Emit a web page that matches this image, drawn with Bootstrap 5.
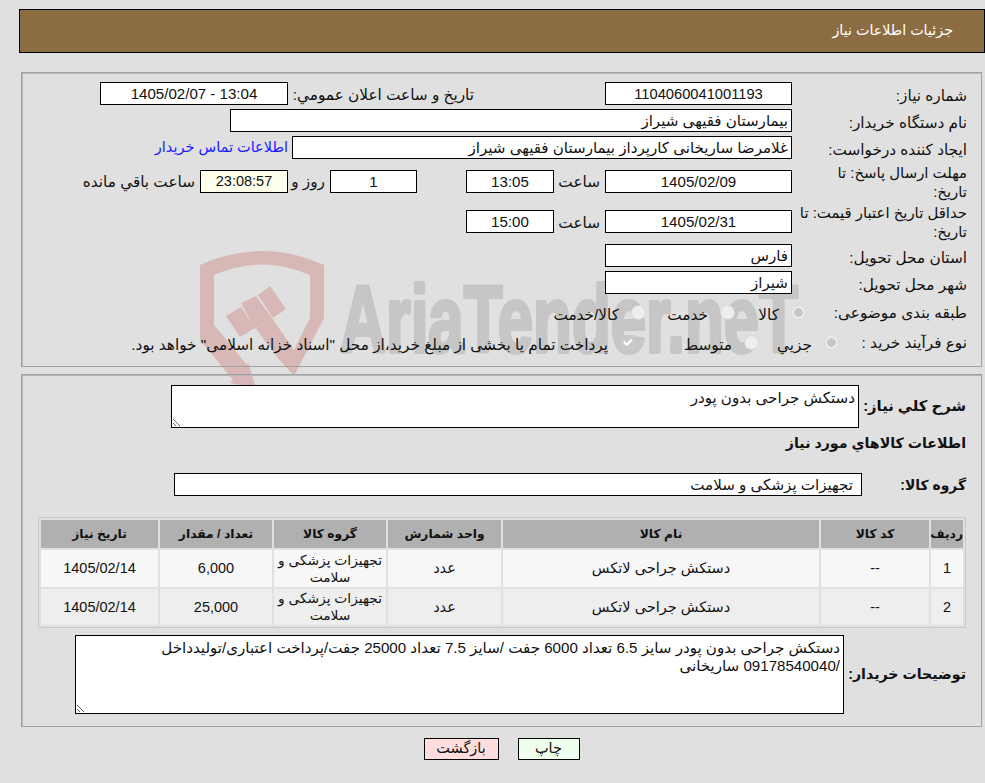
<!DOCTYPE html>
<html lang="fa" dir="rtl">
<head>
<meta charset="utf-8">
<title>جزئیات اطلاعات نیاز</title>
<link href="https://cdn.jsdelivr.net/npm/bootstrap@5.3.0/dist/css/bootstrap.min.css" rel="stylesheet">
<style>
html,body{height:783px;overflow:hidden}
body{background:#e0e0e0;color:#111;font:15.3px/1.2 "Liberation Sans","DejaVu Sans",sans-serif}
.stage{position:relative;width:985px;height:783px;padding-top:9px}
.wm{position:absolute;left:0;top:0;z-index:0}
.layer{position:relative;z-index:1}
.hdr{margin-left:19px;height:44px;background:#8c6d43;border:1px solid #000;color:#fff;padding-right:31px;margin-bottom:19px;font-size:14.3px}
.pnl{margin-right:3px;width:961px;border:1px solid #a0a0a0;box-shadow:inset 1px 1px 0 #b8b8b8}
.p1{padding:9px 14px 8px 0;height:295px;margin-bottom:7px}
.p2{padding:10px 15px 12px 0;height:353px}
.frow{height:23px;margin-bottom:4px}
.h36{height:36px}.h37{height:37px}.h30{height:30px;margin-bottom:0}
.lab{width:175px;flex:none;padding:3px 0 0 5px;line-height:19px;white-space:nowrap}
.lab.tight{font-size:14.9px}
.fld{display:block;flex:none;height:23px;border:1px solid #000;border-radius:0;background:#fff;color:#111;padding:0 3px;font:inherit;font-size:15.1px;outline:0}
.num{font-size:14.7px}
.f187{width:187px}.f188{width:188px}.f88{width:88px}.f87{width:87px}.f562{width:562px}.f500{width:500px}
.clock{background:#ffffee;font-size:14.5px}
.ti{flex:none;padding:3px 5px 0 0}
.w51{width:51px}.w42{width:42px}.sp131{width:131px;flex:none}.sp49{width:49px;flex:none}.lab2{width:186px;flex:none;padding-top:3px}
.linkb{color:#1a1aff;text-decoration:none;padding-right:4px;font-size:14.5px}
.rad{width:15px;height:15px;flex:none;margin:0 0 2px 0!important;opacity:1!important;border:1px solid #d6d6d6!important;background-color:#eeeeee!important}
.rad.on{background-image:radial-gradient(circle,#c6c6c6 0,#c6c6c6 4px,#ececec 4.6px)!important}
.rad.cb{background-color:#c9c9c9!important;border:0!important;border-radius:2px}
.opt{flex:none;gap:12px}
.opt span{padding-top:5px}
.l161{width:161px;flex:none;padding-top:1px}.l128{width:128px;flex:none;padding-top:1px}
.o71{width:71px}.o89{width:89px}.o80{width:80px}.o124{width:124px}
.ttl{font-weight:700;font-size:14.2px;white-space:nowrap}
.ttl.big{font-size:14.8px}
.ttl.sm{font-size:13.9px;padding-top:1px}
.l108{width:107px;flex:none}.l105{width:104px;flex:none}.l122{width:122px;flex:none}
.ta{resize:both;height:43px;width:688px;padding:3px;line-height:18px;direction:rtl}
.ta2{height:79px;width:769px}
.hd2{height:20px;margin:6px 0 19px}
.fg{width:688px}
.tblbox{margin:21px 0 7px 0;width:928px;border:1px solid #c8c8c8;height:111px;font-size:14.5px}
.gt{border-collapse:separate;border-spacing:2px;width:100%;table-layout:fixed;margin:0;text-align:center}
.gt th,.gt td{padding:0;border:0;vertical-align:middle;line-height:17px}
.gt th{background:#b0b0b0;height:28px;font-weight:700;font-size:12.3px;color:#111}
.gt tbody tr:nth-child(1) td{background:#f7f7f7;height:37px}
.gt tbody tr:nth-child(2) td{background:#eeeeee;height:36px}
.gt td.tg{font-size:13.8px}
.btns{margin-top:11px;padding-left:18px;gap:19px}
.bt{height:22px;border:1px solid #000;border-radius:0;padding:0;font:inherit;font-size:14.5px;color:#111}
.bprint{width:62px;background:#eeffee}
.bback{width:75px;background:#ffdddd}
</style>
</head>
<body>
<div class="stage">
  <svg class="wm" width="985" height="430" viewBox="0 0 985 430" aria-hidden="true">
    <g fill="#d8b7b7">
      <path d="M200 265Q262 237 324 265V318L294 376V350L310 318V275Q262 254 214 275V325L247 365L248 362L256 388L230 383L233 380L200 340Z"/>
      <path d="M226 316L241 307L255 328L240 337Z"/>
      <path d="M241 303L256 296L272 318L255 329Z"/>
      <path d="M258 295L270 286L286 309L273 318Z"/>
      <path d="M256 329L272 318L294 350V376L277 357Z"/>
    </g>
    <text x="340" y="352" fill="#c6c6c6" stroke="#c6c6c6" stroke-width="4" stroke-linejoin="round" font-family="Liberation Sans" font-weight="700" font-size="94" textLength="458" lengthAdjust="spacingAndGlyphs" direction="ltr" unicode-bidi="bidi-override">AriaTender.neT</text>
  </svg>
  <div class="layer">
    <div class="hdr d-flex align-items-center">جزئیات اطلاعات نیاز</div>

    <div class="pnl p1">
      <div class="frow d-flex align-items-center">
        <div class="lab">شماره نیاز:</div>
        <input class="fld f187 text-center num" readonly value="1104060041001193">
        <div class="sp131"></div>
        <div class="lab2">تاریخ و ساعت اعلان عمومي:</div>
        <input class="fld f188 text-center" readonly value="1405/02/07 - 13:04" dir="ltr">
      </div>
      <div class="frow d-flex align-items-center">
        <div class="lab">نام دستگاه خریدار:</div>
        <input class="fld f562" readonly value="بیمارستان فقیهی شیراز">
      </div>
      <div class="frow d-flex align-items-center">
        <div class="lab">ایجاد کننده درخواست:</div>
        <input class="fld f500" readonly value="غلامرضا ساریخانی کارپرداز بیمارستان فقیهی شیراز">
        <a class="linkb" href="#">اطلاعات تماس خریدار</a>
      </div>
      <div class="frow h36 d-flex align-items-center">
        <div class="lab tight">مهلت ارسال پاسخ: تا<br>تاریخ:</div>
        <input class="fld f187 text-center" readonly value="1405/02/09">
        <div class="ti w51">ساعت</div>
        <input class="fld f88 text-center" readonly value="13:05">
        <div class="sp49"></div>
        <input class="fld f87 text-center" readonly value="1">
        <div class="ti w42">روز و</div>
        <input class="fld f88 text-center clock" readonly value="23:08:57">
        <div class="ti">ساعت باقي مانده</div>
      </div>
      <div class="frow h37 d-flex align-items-center">
        <div class="lab tight">حداقل تاریخ اعتبار قیمت: تا<br>تاریخ:</div>
        <input class="fld f187 text-center" readonly value="1405/02/31">
        <div class="ti w51">ساعت</div>
        <input class="fld f88 text-center" readonly value="15:00">
      </div>
      <div class="frow d-flex align-items-center">
        <div class="lab">استان محل تحویل:</div>
        <input class="fld f187" readonly value="فارس">
      </div>
      <div class="frow d-flex align-items-center">
        <div class="lab">شهر محل تحویل:</div>
        <input class="fld f187" readonly value="شیراز">
      </div>
      <div class="frow h30 d-flex align-items-center">
        <div class="l161">طبقه بندی موضوعی:</div>
        <div class="opt o71 d-flex align-items-center"><input class="form-check-input rad on" type="radio" disabled><span>کالا</span></div>
        <div class="opt o89 d-flex align-items-center"><input class="form-check-input rad" type="radio" disabled><span>خدمت</span></div>
        <div class="opt d-flex align-items-center"><input class="form-check-input rad" type="radio" disabled><span>کالا/خدمت</span></div>
      </div>
      <div class="frow h30 d-flex align-items-center">
        <div class="l128">نوع فرآیند خرید :</div>
        <div class="opt o80 d-flex align-items-center"><input class="form-check-input rad on" type="radio" disabled><span>جزیي</span></div>
        <div class="opt o124 d-flex align-items-center"><input class="form-check-input rad" type="radio" disabled><span>متوسط</span></div>
        <div class="opt d-flex align-items-center"><input class="form-check-input rad cb" type="checkbox" checked disabled><span>پرداخت تمام یا بخشی از مبلغ خرید،از محل "اسناد خزانه اسلامی" خواهد بود.</span></div>
      </div>
    </div>

    <div class="pnl p2">
      <div class="d-flex align-items-center">
        <div class="ttl big l108">شرح کلي نياز:</div>
        <textarea class="fld ta" readonly>دستکش جراحی بدون پودر</textarea>
      </div>
      <div class="ttl hd2 d-flex align-items-center">اطلاعات کالاهاي مورد نياز</div>
      <div class="d-flex align-items-center">
        <div class="ttl sm l105">گروه کالا:</div>
        <input class="fld fg pe-2" readonly value="تجهیزات پزشکی و سلامت">
      </div>
      <div class="tblbox">
        <table class="gt">
          <colgroup><col style="width:32px"><col style="width:108px"><col style="width:316px"><col style="width:113px"><col style="width:112px"><col style="width:112px"><col></colgroup>
          <thead>
            <tr><th>ردیف</th><th>کد کالا</th><th>نام کالا</th><th>واحد شمارش</th><th>گروه کالا</th><th>تعداد / مقدار</th><th>تاریخ نیاز</th></tr>
          </thead>
          <tbody>
            <tr><td>1</td><td>--</td><td>دستکش جراحی لاتکس</td><td>عدد</td><td class="tg">تجهیزات پزشکی و<br>سلامت</td><td>6,000</td><td>1405/02/14</td></tr>
            <tr><td>2</td><td>--</td><td>دستکش جراحی لاتکس</td><td>عدد</td><td class="tg">تجهیزات پزشکی و<br>سلامت</td><td>25,000</td><td>1405/02/14</td></tr>
          </tbody>
        </table>
      </div>
      <div class="d-flex align-items-center">
        <div class="ttl l122">توضیحات خریدار:</div>
        <textarea class="fld ta ta2" readonly>دستکش جراحی بدون پودر سایز 6.5 تعداد 6000 جفت /سایز 7.5 تعداد 25000 جفت/پرداخت اعتباری/تولیدداخل
/09178540040 ساریخانی</textarea>
      </div>
    </div>

    <div class="btns d-flex justify-content-center">
      <button class="bt bprint" type="button">چاپ</button>
      <button class="bt bback" type="button">بازگشت</button>
    </div>
  </div>
</div>
<script src="https://cdn.jsdelivr.net/npm/bootstrap@5.3.0/dist/js/bootstrap.bundle.min.js"></script>
</body>
</html>
